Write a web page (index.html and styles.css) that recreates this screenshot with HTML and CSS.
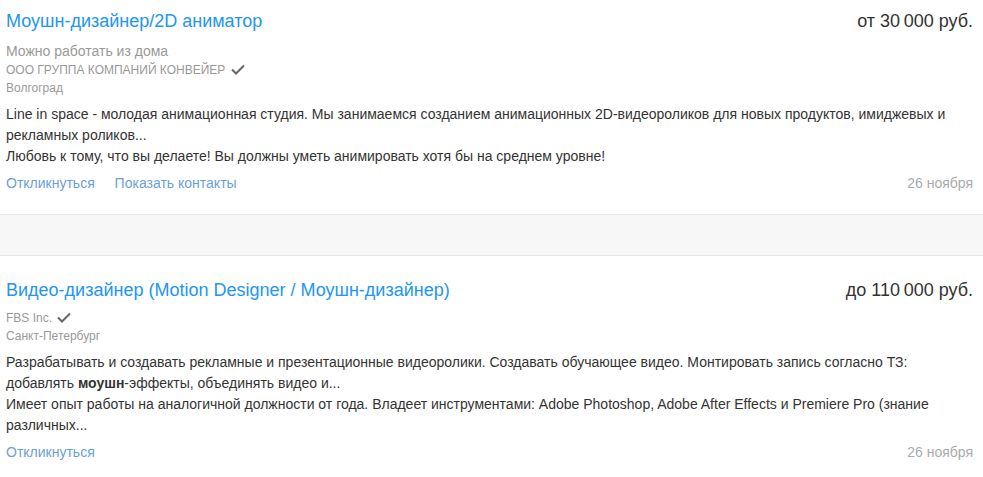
FILE: index.html
```html
<!DOCTYPE html>
<html lang="ru">
<head>
    <meta charset="UTF-8">
    <title>Вакансии</title>
    <link rel="stylesheet" href="styles.css">
</head>
<body>

<div class="vacancy">
    <div class="vacancy-head">
        <a class="vacancy-title" href="#">Моушн-дизайнер/2D аниматор</a>
        <div class="vacancy-salary">от 30&#8201;000 руб.</div>
    </div>
    <div class="vacancy-remote">Можно работать из дома</div>
    <div class="vacancy-company">ООО ГРУППА КОМПАНИЙ КОНВЕЙЕР
        <svg class="check" width="14" height="11" viewBox="0 0 14 11"><path d="M1 5.5l4 4L13 1.5" fill="none" stroke="#666" stroke-width="2"/></svg>
    </div>
    <div class="vacancy-city">Волгоград</div>
    <div class="vacancy-text">
        Line in space - молодая анимационная студия. Мы занимаемся созданием анимационных 2D-видеороликов для новых продуктов, имиджевых и рекламных роликов...<br>
        Любовь к тому, что вы делаете! Вы должны уметь анимировать хотя бы на среднем уровне!
    </div>
    <div class="vacancy-foot">
        <div class="vacancy-actions">
            <a href="#">Откликнуться</a>
            <a href="#">Показать контакты</a>
        </div>
        <div class="vacancy-date">26 ноября</div>
    </div>
</div>

<div class="separator"></div>

<div class="vacancy">
    <div class="vacancy-head">
        <a class="vacancy-title" href="#">Видео-дизайнер (Motion Designer / Моушн-дизайнер)</a>
        <div class="vacancy-salary">до 110&#8201;000 руб.</div>
    </div>
    <div class="vacancy-company company-first">FBS Inc.
        <svg class="check" width="14" height="11" viewBox="0 0 14 11"><path d="M1 5.5l4 4L13 1.5" fill="none" stroke="#666" stroke-width="2"/></svg>
    </div>
    <div class="vacancy-city">Санкт-Петербург</div>
    <div class="vacancy-text">
        Разрабатывать и создавать рекламные и презентационные видеоролики. Создавать обучающее видео. Монтировать запись согласно ТЗ: добавлять <b>моушн</b>-эффекты, объединять видео и...<br>
        Имеет опыт работы на аналогичной должности от года. Владеет инструментами: Adobe Photoshop, Adobe After Effects и Premiere Pro (знание различных...
    </div>
    <div class="vacancy-foot">
        <div class="vacancy-actions">
            <a href="#">Откликнуться</a>
        </div>
        <div class="vacancy-date">26 ноября</div>
    </div>
</div>

</body>
</html>
```
FILE: styles.css
```css
body {
    font-family: Arial, "Liberation Sans", sans-serif;
    margin: 0;
    background-color: #fff;
    color: #333;
}
a {
    text-decoration: none;
}
.vacancy {
    padding: 22px 10px 21px 6px;
}
.vacancy:first-child {
    padding-top: 9px;
}
.vacancy-head {
    display: flex;
    justify-content: space-between;
    align-items: baseline;
}
.vacancy-title {
    font-size: 18px;
    color: #2196f3;
    line-height: 24px;
}
.vacancy-salary {
    font-size: 18px;
    color: #333;
}
.vacancy-remote {
    margin-top: 9px;
    font-size: 14px;
    line-height: 18px;
    color: #999;
}
.vacancy-company {
    font-size: 12px;
    line-height: 20px;
    color: #999;
}
.company-first {
    margin-top: 6px;
}
.check {
    vertical-align: -1px;
    margin-left: 2px;
}
.vacancy-city {
    font-size: 12px;
    line-height: 16px;
    color: #999;
}
.vacancy-text {
    margin-top: 8px;
    font-size: 14px;
    line-height: 21px;
}
.vacancy-foot {
    display: flex;
    justify-content: space-between;
    margin-top: 6px;
    font-size: 14px;
    line-height: 20px;
}
.vacancy-actions a {
    color: #6a9fd8;
    margin-right: 16px;
}
.vacancy-date {
    color: #aaa;
}
.separator {
    height: 40px;
    background-color: #f7f7f7;
    border-top: 1px solid #e5e5e5;
    border-bottom: 1px solid #e5e5e5;
}
```
